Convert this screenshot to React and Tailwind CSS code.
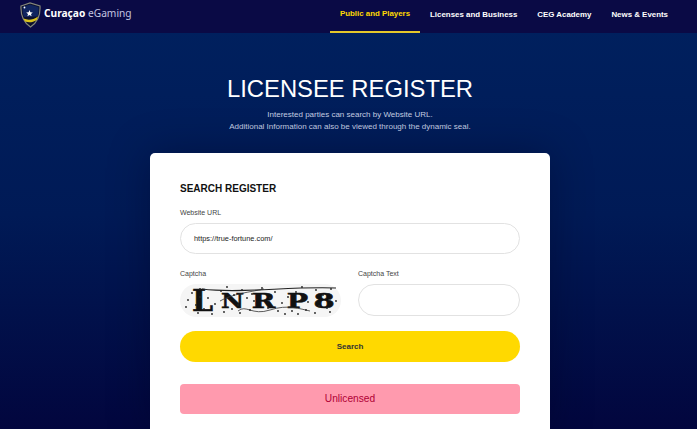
const navItems = [
  { label: 'Public and Players', active: true },
  { label: 'Licenses and Business' },
  { label: 'CEG Academy' },
  { label: 'News & Events' },
];

const dots = [
  [12, 9], [20, 5], [28, 14], [35, 20], [41, 7], [47, 3], [54, 11], [8, 16], [6, 23], [16, 21], [24, 25], [58, 21],
  [62, 6], [72, 10], [82, 4], [95, 8], [102, 19], [108, 13], [116, 8], [122, 3], [128, 18], [136, 6], [143, 11],
  [147, 24], [151, 5], [126, 26], [98, 27], [88, 24], [70, 26], [60, 29], [44, 28], [32, 30], [18, 29], [105, 30],
  [112, 27], [118, 30], [135, 29], [150, 28], [156, 17], [74, 17], [67, 14], [90, 14], [139, 22], [20, 13], [52, 25],
];

const Logo = () => (
  <svg width="22" height="26" viewBox="0 0 22 26" className="mt-[1px] shrink-0">
    <path d="M1 4 L10 1 L20 4 C20.5 13 18.5 20 10.5 25 C3 20 0.5 13 1 4 Z" fill="#0b0f2c" stroke="#85877a" strokeWidth="1.2" />
    <path d="M2.5 5 L10 2.5 L18.5 5 C18.8 9 18.4 12 17.6 14.5 L4 15 C2.8 12 2.3 9 2.5 5 Z" fill="#10245f" />
    <path d="M3.5 16.5 C8 18.5 13 18 18 14.5 L16.8 18 C12.5 20.8 8.5 20.8 5 19.5 Z" fill="#d9c21c" />
    <path d="M9.5 8 l.9 2.2 2.4 .2 -1.8 1.5 .6 2.3 -2.1 -1.2 -2.1 1.2 .6 -2.3 -1.8 -1.5 2.4 -.2 Z" fill="#ffffff" />
    <circle cx="4.5" cy="5.5" r="0.9" fill="#ffffff" />
  </svg>
);

const Captcha = () => (
  <div className="relative flex h-[33px] w-[161px] items-center rounded-full bg-[#f5f5f5] pl-[12px] font-['DejaVu_Serif',serif] leading-none font-bold text-[#111] [-webkit-text-stroke:0.6px_#111]">
    <span className="w-[22px] text-[30px]">L</span>
    <span className="ml-[6px] w-[25px] scale-x-[1.2] text-center text-[21px]">N</span>
    <span className="ml-[5px] w-[27px] scale-x-[1.35] text-center text-[21px]">R</span>
    <span className="ml-[9px] w-[23px] scale-x-[1.35] text-center text-[21px]">P</span>
    <span className="ml-[3px] w-[24px] scale-x-[1.45] text-center text-[21px]">8</span>
    <svg width="161" height="33" viewBox="0 0 161 33" className="absolute inset-0">
      <path d="M22 5 C60 10 110 2 156 4" fill="none" stroke="#222" strokeWidth="1.1" />
      <path d="M40 17 C52 10 70 8 84 5" fill="none" stroke="#333" strokeWidth="0.8" />
      <path d="M58 27 C66 20 72 32 90 26 S120 25 130 27" fill="none" stroke="#333" strokeWidth="0.8" />
      {dots.map(([x, y]) => (
        <circle key={`${x}-${y}`} cx={x} cy={y} r="0.9" fill="#222" />
      ))}
    </svg>
  </div>
);

export default function App() {
  return (
    <div className="h-[429px] w-full overflow-hidden bg-gradient-to-b from-[#00215f] via-[#001a56] to-[#02063e] font-['Liberation_Sans',Arial,sans-serif]">
      <header className="flex h-[33px] items-start justify-between bg-[#0a0a45] pr-[19px] pl-[20px]">
        <div className="flex h-[28px] items-center gap-[2px]">
          <Logo />
          <span className="font-['Noto_Sans',sans-serif] text-[10.2px] text-[#c3c5e0]">
            <span className="font-bold text-white">Curaçao</span> eGaming
          </span>
        </div>
        <nav className="flex">
          {navItems.map((item) => (
            <a
              key={item.label}
              className={`flex h-[33px] items-center px-[10px] pb-[4px] text-[7.9px] font-bold ${
                item.active ? 'border-b-2 border-[#e4c72a] text-[#ffd900]' : 'text-white'
              }`}
            >
              {item.label}
            </a>
          ))}
        </nav>
      </header>

      <main className="flex flex-col items-center pl-[3px]">
        <h1 className="mt-[40px] text-[23.8px] leading-[32px] text-white">LICENSEE REGISTER</h1>
        <p className="mt-[4px] text-center text-[8px] leading-[12px] text-[#c5cde2]">
          Interested parties can search by Website URL.
          <br />
          Additional Information can also be viewed through the dynamic seal.
        </p>

        <section className="mt-[20px] flex w-[400px] flex-col rounded-t-[5px] bg-white px-[30px] pt-[30px] pb-[20px] shadow-[0_0_40px_rgba(0,0,30,0.35)]">
          <h2 className="text-[10px] leading-[12px] font-bold text-[#111]">SEARCH REGISTER</h2>

          <label className="mt-[13px] text-[7px] leading-[10px] text-[#444]">Website URL</label>
          <div className="mt-[5px] flex h-[31px] items-center rounded-full border border-[#e2e2e2] px-[13px] text-[7.4px] text-[#222]">
            https://true-fortune.com/
          </div>

          <div className="mt-[15px] flex gap-[17px]">
            <div className="flex w-[161px] flex-col">
              <label className="text-[7px] leading-[10px] text-[#444]">Captcha</label>
              <div className="mt-[5px]">
                <Captcha />
              </div>
            </div>
            <div className="flex flex-1 flex-col">
              <label className="text-[7px] leading-[10px] text-[#444]">Captcha Text</label>
              <div className="mt-[5px] h-[32px] rounded-full border border-[#e2e2e2]" />
            </div>
          </div>

          <button className="mt-[14px] h-[31px] rounded-full bg-[#ffd900] text-[8px] font-bold text-[#333]">
            Search
          </button>

          <div className="mt-[22px] flex h-[30px] items-center justify-center rounded-[4px] bg-[#ff9aae] text-[10.2px] text-[#b00035]">
            Unlicensed
          </div>
        </section>
      </main>
    </div>
  );
}
